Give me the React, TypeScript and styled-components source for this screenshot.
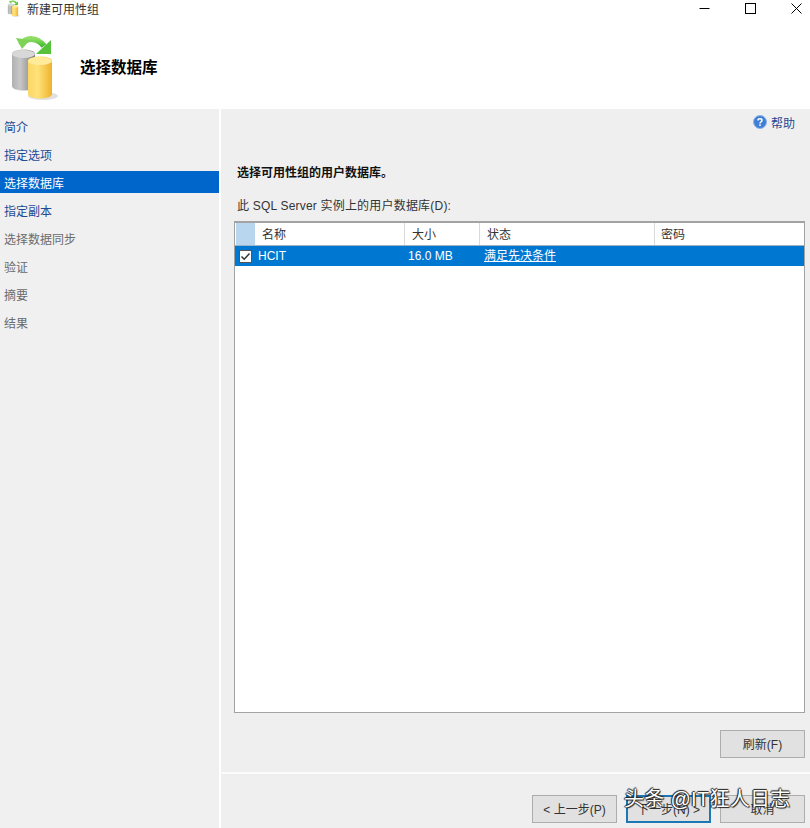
import React from 'react';
import styled, { createGlobalStyle } from 'styled-components';

const FONT = `"Liberation Sans", "Noto Sans CJK SC", sans-serif`;

const Global = createGlobalStyle`
  html, body { margin: 0; padding: 0; background: #fff; }
  body { font-family: ${FONT}; font-size: 12px; color: #222; }
`;

const Dialog = styled.div`
  position: relative;
  width: 810px;
  height: 828px;
  overflow: hidden;
  display: flex;
  flex-direction: column;
  background: #fff;
`;

const TitleBar = styled.div`
  height: 20px;
  box-sizing: border-box;
  padding: 0 0 3px 7px;
  display: flex;
  align-items: center;
  gap: 7px;
  font-size: 12px;
  color: #333;
`;

const WindowButtons = styled.div`
  margin-left: auto;
  display: flex;
  align-items: center;
  gap: 35px;
  padding-right: 8px;
  height: 18px;
`;

const Header = styled.div`
  height: 89px;
  display: flex;
  align-items: flex-start;
  padding: 15px 0 0 10px;
  box-sizing: border-box;
`;

const HeaderTitle = styled.div`
  margin: 21px 0 0 22px;
  font-size: 15.5px;
  line-height: 20px;
  font-weight: 700;
  color: #000;
  font-family: "Noto Sans CJK SC", sans-serif;
`;

const Body = styled.div`
  flex: 1;
  display: flex;
  min-height: 0;
`;

const Nav = styled.nav`
  width: 219px;
  background: #f0f0f0;
  padding-top: 6px;
  flex-shrink: 0;
`;

const NavItem = styled.div<{ $state: 'link' | 'active' | 'muted' }>`
  height: 22px;
  line-height: 26px;
  margin-bottom: 6px;
  padding-left: 4px;
  font-size: 12px;
  color: ${(p) => (p.$state === 'active' ? '#fff' : p.$state === 'link' ? '#1d4a94' : '#6b6b6b')};
  background: ${(p) => (p.$state === 'active' ? '#0066cc' : 'transparent')};
`;

const Main = styled.main`
  flex: 1;
  margin-left: 2px;
  background: #efeff0;
  display: flex;
  flex-direction: column;
  min-width: 0;
`;

const HelpRow = styled.div`
  height: 26px;
  display: flex;
  justify-content: flex-end;
  align-items: center;
  gap: 4px;
  padding: 0 15px 0 0;
  font-size: 12px;
  color: #1d4a94;
`;

const Content = styled.div`
  display: flex;
  flex-direction: column;
  padding: 0 5px 0 13px;
`;

const SectionTitle = styled.div`
  margin: 28px 0 0 3px;
  height: 18px;
  line-height: 18px;
  font-size: 12px;
  font-weight: 700;
  color: #111;
  font-family: "Noto Sans CJK SC", sans-serif;
`;

const GridLabel = styled.div`
  margin: 16px 0 6px 3px;
  height: 18px;
  line-height: 18px;
  font-size: 12px;
  letter-spacing: 0.2px;
  color: #333;
`;

const Grid = styled.div`
  height: 492px;
  box-sizing: border-box;
  background: #fff;
  border: 1px solid #a3a3a3;
  border-top: 2px solid #a3a3a3;
  display: flex;
  flex-direction: column;
`;

const GridRow = styled.div`
  display: grid;
  grid-template-columns: 20px 150px 75px 175px 1fr;
  align-items: stretch;
`;

const HeadRow = styled(GridRow)`
  height: 22px;
  border-bottom: 1px solid #9db4c6;
  font-size: 12px;
  color: #333;
`;

const HeadCorner = styled.div`
  background: #b9d6ef;
  margin-left: 1px;
`;

const HeadCell = styled.div`
  display: flex;
  align-items: center;
  padding: 0 0 2px 7px;
  border-right: 1px solid #d9d9d9;
  &:last-child { border-right: 0; padding-left: 6px; }
`;

const DataRow = styled(GridRow)`
  height: 20px;
  background: #0078d2;
  color: #fff;
  font-size: 12px;
  line-height: 20px;
`;

const CheckCell = styled.div`
  display: flex;
  align-items: center;
  justify-content: center;
`;

const NameCell = styled.div`
  padding-left: 3px;
`;

const SizeCell = styled.div`
  padding-left: 3px;
`;

const StatusLink = styled.a`
  padding-left: 4px;
  color: #fff;
  text-decoration: underline;
`;

const RefreshRow = styled.div`
  margin-top: 17px;
  display: flex;
  justify-content: flex-end;
`;

const Button = styled.button<{ $primary?: boolean }>`
  width: 85px;
  height: 28px;
  box-sizing: border-box;
  padding: 0 0 2px;
  font-family: ${FONT};
  font-size: 12px;
  color: #333;
  background: #e1e1e1;
  border: ${(p) => (p.$primary ? '2px solid #1c77b4' : '1px solid #adadad')};
`;

const Divider = styled.div`
  margin-top: 14px;
  height: 2px;
  background: #fbfbfb;
`;

const Footer = styled.div`
  display: flex;
  justify-content: flex-end;
  gap: 9px;
  padding: 21px 5px 0 0;
`;

const Watermark = styled.div`
  position: absolute;
  left: 624px;
  top: 786px;
  font-size: 20px;
  line-height: 26px;
  letter-spacing: 0.3px;
  color: #fff;
  text-shadow: 0 0 1px #111, 1px 1px 1px #222, -1px 0 1px #222, 0 -1px 1px #222;
  white-space: nowrap;
`;

const DbIcon = ({ width, height, id }: { width: number; height: number; id: string }) => (
  <svg width={width} height={height} viewBox="0 0 48 66" aria-hidden>
    <defs>
      <linearGradient id={`${id}g`} x1="0" x2="1" y1="0" y2="0">
        <stop offset="0" stopColor="#b0b0b0" />
        <stop offset="0.35" stopColor="#c8c8c8" />
        <stop offset="1" stopColor="#7c7c7c" />
      </linearGradient>
      <linearGradient id={`${id}y`} x1="0" x2="1" y1="0" y2="0">
        <stop offset="0" stopColor="#fbd765" />
        <stop offset="0.4" stopColor="#ffe27a" />
        <stop offset="1" stopColor="#eeb22c" />
      </linearGradient>
      <linearGradient id={`${id}a`} x1="0" x2="0" y1="0" y2="1">
        <stop offset="0" stopColor="#8fdc62" />
        <stop offset="1" stopColor="#45bb30" />
      </linearGradient>
    </defs>
    <ellipse cx="33" cy="61" rx="15" ry="4" fill="#000" opacity="0.12" />
    <path d="M11 10 C16 2 27 2 34 11" fill="none" stroke={`url(#${id}a)`} strokeWidth="6" />
    <path d="M6 3 L20 5 L12 14 Z" fill="#7ed356" />
    <path d="M41 5 L41 19 L26 19 Z" fill="#55c23a" />
    <path d="M2 19 C2 13 25 13 25 19 L25 51 C25 57 2 57 2 51 Z" fill={`url(#${id}g)`} />
    <ellipse cx="13.5" cy="19" rx="11.5" ry="4" fill="#d8d8d8" />
    <path d="M18 26 C18 20 42 20 42 26 L42 59 C42 65 18 65 18 59 Z" fill={`url(#${id}y)`} />
    <ellipse cx="30" cy="26" rx="12" ry="4" fill="#ffeb9a" />
  </svg>
);

const HelpIcon = () => (
  <svg width="14" height="14" viewBox="0 0 14 14" aria-hidden>
    <circle cx="7" cy="7" r="6.5" fill="#3f7fd6" stroke="#8fb4e6" />
    <path d="M5 5.4 C5 3.2 9 3.2 9 5.4 C9 6.8 7 6.8 7 8.4" fill="none" stroke="#fff" strokeWidth="1.5" />
    <rect x="6.2" y="9.4" width="1.6" height="1.6" fill="#fff" />
  </svg>
);

const WindowGlyphs = () => (
  <WindowButtons>
    <svg width="11" height="11" viewBox="0 0 11 11" aria-hidden>
      <path d="M0.5 5.5H10.5" stroke="#000" />
    </svg>
    <svg width="11" height="11" viewBox="0 0 11 11" aria-hidden>
      <rect x="0.5" y="0.5" width="10" height="10" fill="none" stroke="#000" />
    </svg>
    <svg width="11" height="11" viewBox="0 0 11 11" aria-hidden>
      <path d="M0.5 0.5L10.5 10.5M10.5 0.5L0.5 10.5" stroke="#000" />
    </svg>
  </WindowButtons>
);

const CheckBox = () => (
  <svg width="13" height="13" viewBox="0 0 13 13" aria-hidden>
    <rect x="0.5" y="0.5" width="12" height="12" fill="#fff" stroke="#555" />
    <path d="M2.5 6.5L5.2 9.2L10.5 3.5" fill="none" stroke="#333" strokeWidth="1.5" />
  </svg>
);

const navItems: { label: string; state: 'link' | 'active' | 'muted' }[] = [
  { label: '简介', state: 'link' },
  { label: '指定选项', state: 'link' },
  { label: '选择数据库', state: 'active' },
  { label: '指定副本', state: 'link' },
  { label: '选择数据同步', state: 'muted' },
  { label: '验证', state: 'muted' },
  { label: '摘要', state: 'muted' },
  { label: '结果', state: 'muted' },
];

export default function App() {
  return (
    <Dialog>
      <Global />
      <TitleBar>
        <DbIcon width={13} height={17} id="small" />
        新建可用性组
        <WindowGlyphs />
      </TitleBar>
      <Header>
        <DbIcon width={48} height={66} id="large" />
        <HeaderTitle>选择数据库</HeaderTitle>
      </Header>
      <Body>
        <Nav>
          {navItems.map((item) => (
            <NavItem key={item.label} $state={item.state}>{item.label}</NavItem>
          ))}
        </Nav>
        <Main>
          <HelpRow>
            <HelpIcon />
            帮助
          </HelpRow>
          <Content>
            <SectionTitle>选择可用性组的用户数据库。</SectionTitle>
            <GridLabel>此 SQL Server 实例上的用户数据库(D):</GridLabel>
            <Grid>
              <HeadRow>
                <HeadCorner />
                <HeadCell>名称</HeadCell>
                <HeadCell>大小</HeadCell>
                <HeadCell>状态</HeadCell>
                <HeadCell>密码</HeadCell>
              </HeadRow>
              <DataRow>
                <CheckCell><CheckBox /></CheckCell>
                <NameCell>HCIT</NameCell>
                <SizeCell>16.0 MB</SizeCell>
                <StatusLink>满足先决条件</StatusLink>
                <div />
              </DataRow>
            </Grid>
            <RefreshRow>
              <Button>刷新(F)</Button>
            </RefreshRow>
          </Content>
          <Divider />
          <Footer>
            <Button>&lt; 上一步(P)</Button>
            <Button $primary>下一步(N) &gt;</Button>
            <Button>取消</Button>
          </Footer>
        </Main>
      </Body>
      <Watermark>头条 @IT狂人日志</Watermark>
    </Dialog>
  );
}
